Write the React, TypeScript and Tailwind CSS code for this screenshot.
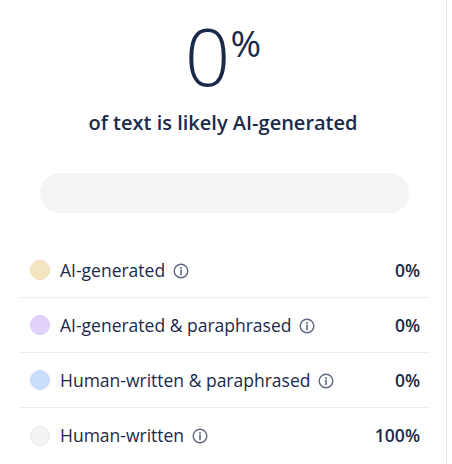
import React from 'react';

type Row = { label: string; value: string; dot: string };

const rows: Row[] = [
    { label: 'AI-generated', value: '0%', dot: 'bg-[#f4e6c0] border-[#ecdcb0]' },
    { label: 'AI-generated & paraphrased', value: '0%', dot: 'bg-[#e2d3fb] border-[#d9c8f6]' },
    { label: 'Human-written & paraphrased', value: '0%', dot: 'bg-[#cadffb] border-[#bed6f6]' },
    { label: 'Human-written', value: '100%', dot: 'bg-[#f3f3f3] border-[#e6e6e6]' },
];

const InfoIcon = () => (
    <svg width="16" height="16" viewBox="0 0 16 16" fill="none" className="shrink-0">
        <circle cx="8" cy="8" r="6.8" stroke="#5f6880" strokeWidth="1.4" />
        <circle cx="8" cy="4.9" r="1" fill="#5f6880" />
        <path d="M8 7.2v4.4" stroke="#5f6880" strokeWidth="1.6" strokeLinecap="round" />
    </svg>
);

export default function App() {
    return (
        <div className="w-[452px] h-[464px] bg-white" style={{ fontFamily: '"Open Sans", sans-serif' }}>
            <div className="w-[447px] h-full border-r border-[#e4e4e4] flex flex-col text-[#1b2a4a]">
                {/* Score */}
                <div className="h-[108px] flex justify-center items-start">
                    <span className="text-[80px] leading-[1.37] font-light">0</span>
                    <span className="text-[37px] leading-[1.4] font-normal mt-[17px]">%</span>
                </div>
                <p className="text-center text-[20px] font-semibold leading-6 mt-[3px]">
                    of text is likely AI-generated
                </p>

                {/* Bar */}
                <div className="ml-[40px] mr-[37px] mt-[38px] h-[40px] rounded-full bg-[#f4f4f4]" />

                {/* Legend */}
                <div className="ml-[20px] mr-[16px] mt-[30px] flex flex-col">
                    {rows.map((row, i) => (
                        <div
                            key={row.label}
                            className={`h-[55px] flex items-center pl-[10px] pr-[10px] ${i < rows.length - 1 ? 'border-b border-[#ececec]' : ''}`}
                        >
                            <span className={`w-[20px] h-[20px] rounded-full border ${row.dot}`} />
                            <span className="ml-[10px] text-[17.5px]">{row.label}</span>
                            <span className="ml-[8px] mt-[1px]"><InfoIcon /></span>
                            <span className="ml-auto text-[17.5px] font-semibold">{row.value}</span>
                        </div>
                    ))}
                </div>
            </div>
        </div>
    );
}
